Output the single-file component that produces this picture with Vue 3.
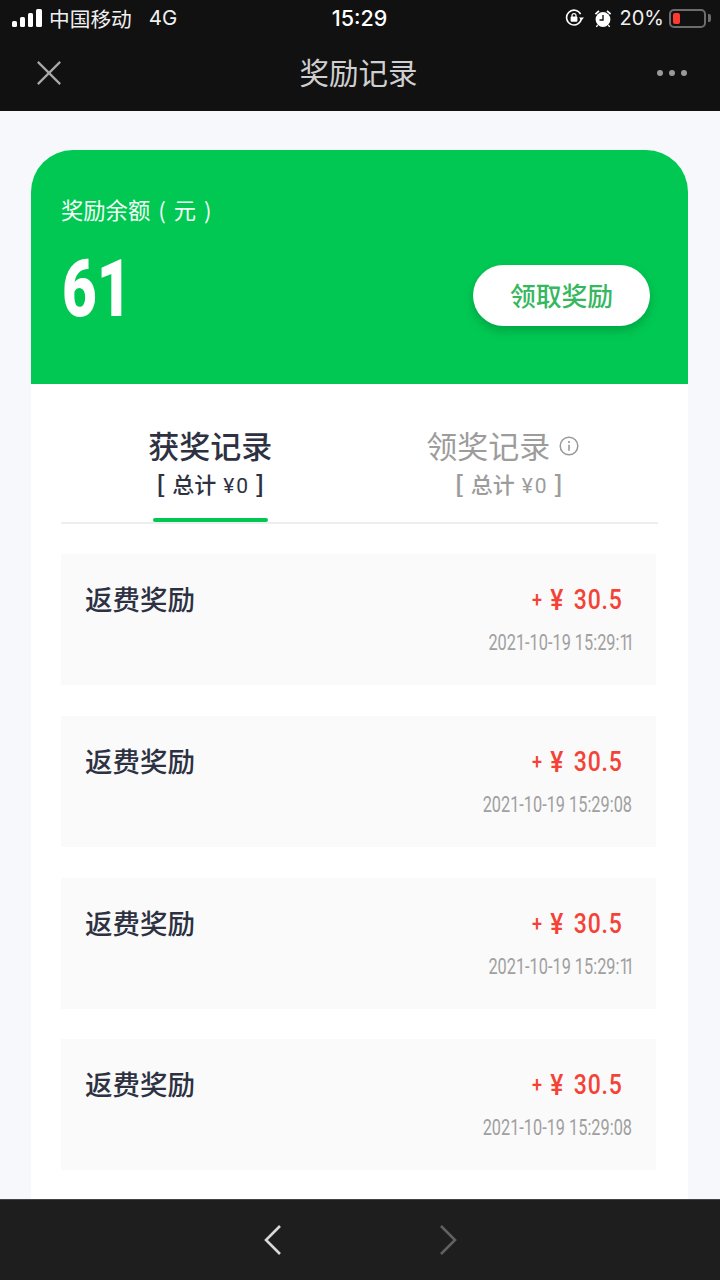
<script setup>
const records = [
  { stamp: '2021-10-19 15:29:', sec: '11', scale: 'narrow' },
  { stamp: '2021-10-19 15:29:', sec: '08', scale: '' },
  { stamp: '2021-10-19 15:29:', sec: '11', scale: 'narrow' },
  { stamp: '2021-10-19 15:29:', sec: '08', scale: '' },
]
</script>

<template>
  <div class="page">
    <header class="top">
      <div class="status">
        <div class="status-left">
          <span class="signal"><i class="b1"></i><i class="b2"></i><i class="b3"></i><i class="b4"></i></span>
          <span class="carrier">中国移动</span>
          <span class="net">4G</span>
        </div>
        <div class="clock">15:29</div>
        <div class="status-right">
          <svg class="lock" width="20" height="18" viewBox="0 0 20 18">
            <path d="M15.6 5.2A7.4 7.4 0 1 0 16.4 9" fill="none" stroke="#fff" stroke-width="1.6"/>
            <path d="M14 8.6h5l-2.5 3z" fill="#fff"/>
            <rect x="5.6" y="7.6" width="6.8" height="5.2" rx="1" fill="#fff"/>
            <path d="M7 8V6.6a2 2 0 0 1 4 0V8" fill="none" stroke="#fff" stroke-width="1.2"/>
          </svg>
          <svg class="alarm" width="18" height="19" viewBox="0 0 18 19">
            <circle cx="9" cy="10.5" r="7.4" fill="#fff"/>
            <path d="M9 6v5H5.5" fill="none" stroke="#111" stroke-width="1.4"/>
            <path d="M0.8 4.6 4.4 1.2 5.6 2.4 2 5.8zM17.2 4.6 13.6 1.2 12.4 2.4 16 5.8z" fill="#fff"/>
            <path d="M3.6 16 2.4 18M14.4 16l1.2 2" stroke="#fff" stroke-width="1.4"/>
          </svg>
          <span class="pct">20%</span>
          <span class="battery"><i class="level"></i></span>
          <span class="nub"></span>
        </div>
      </div>
      <div class="nav">
        <svg class="close" width="28" height="28" viewBox="0 0 28 28">
          <path d="M2 2 26 26M26 2 2 26" stroke="#a8a8a8" stroke-width="2.4" fill="none"/>
        </svg>
        <h1 class="title">奖励记录</h1>
        <div class="dots"><i></i><i></i><i></i></div>
      </div>
    </header>

    <main class="content">
      <section class="card">
        <div class="hero">
          <div class="hero-label">奖励余额 ( 元 )</div>
          <div class="hero-row">
            <div class="balance">61</div>
            <button class="claim">领取奖励</button>
          </div>
        </div>

        <div class="body">
          <div class="tabs">
            <div class="tab active">
              <div class="tab-title">获奖记录</div>
              <div class="tab-sub"><span class="bracket">[</span><span>总计</span><span class="tab-money">¥0</span><span class="bracket">]</span></div>
              <div class="tab-bar"></div>
            </div>
            <div class="tab muted">
              <div class="tab-title with-icon">
                领奖记录
                <svg class="info" width="20" height="20" viewBox="0 0 20 20">
                  <circle cx="10" cy="10" r="8.8" fill="none" stroke="#999" stroke-width="1.5"/>
                  <circle cx="10" cy="6" r="1.1" fill="#999"/>
                  <path d="M10 8.8v6" stroke="#999" stroke-width="1.6"/>
                </svg>
              </div>
              <div class="tab-sub"><span class="bracket">[</span><span>总计</span><span class="tab-money">¥0</span><span class="bracket">]</span></div>
            </div>
          </div>

          <ul class="list">
            <li v-for="(r, i) in records" :key="i" class="item">
              <div class="item-name">返费奖励</div>
              <div class="item-right">
                <div class="amount"><span class="plus">+</span><span class="yen">¥</span><span>30.5</span></div>
                <div class="time">{{ r.stamp }}<span :class="r.scale">{{ r.sec }}</span></div>
              </div>
            </li>
          </ul>
        </div>
      </section>
    </main>

    <footer class="bottom">
      <svg width="20" height="32" viewBox="0 0 20 32">
        <path d="M17 2 3 16l14 14" fill="none" stroke="#d8d8d8" stroke-width="2.6"/>
      </svg>
      <svg width="20" height="32" viewBox="0 0 20 32">
        <path d="M3 2l14 14L3 30" fill="none" stroke="#616161" stroke-width="2.6"/>
      </svg>
    </footer>
  </div>
</template>

<style>
html, body { margin: 0; padding: 0; background: #f6f8fb; }
</style>

<style scoped>
.page {
  width: 720px;
  height: 1280px;
  display: flex;
  flex-direction: column;
  overflow: hidden;
  background: #f6f8fb;
  font-family: "Noto Sans CJK SC", "Noto Sans", sans-serif;
}
.top { height: 111px; background: #111; flex: none; }
.status {
  height: 36px;
  display: grid;
  grid-template-columns: 1fr auto 1fr;
  align-items: center;
  color: #f0f0f0;
  padding: 0 9px 0 12px;
}
.status-left, .status-right { display: flex; align-items: center; }
.status-right { justify-content: flex-end; }
.signal { display: flex; align-items: flex-end; gap: 3px; height: 18px; }
.signal i { width: 5px; background: #fff; border-radius: 1.5px; display: block; }
.signal .b1 { height: 6px; }
.signal .b2 { height: 10px; }
.signal .b3 { height: 14px; }
.signal .b4 { height: 18px; width: 6px; }
.carrier { font-size: 20.7px; line-height: 24px; margin-left: 7px; }
.net { font-family: "Inter", sans-serif; font-size: 20.5px; line-height: 24px; margin-left: 17px; }
.clock { font-family: "Inter", sans-serif; font-size: 21.5px; font-weight: 500; line-height: 24px; color: #fff; margin-right: 4px; }
.lock { margin-right: 9px; }
.alarm { margin-right: 8px; }
.pct { font-family: "Inter", sans-serif; font-size: 20px; line-height: 24px; margin-right: 5px; }
.battery {
  box-sizing: border-box;
  width: 37px;
  height: 19px;
  border: 2px solid #6c6c6c;
  border-radius: 5px;
  padding: 2px;
  display: flex;
}
.level { width: 7px; background: #ff3b30; border-radius: 2px; display: block; }
.nub { width: 3px; height: 8px; background: #6c6c6c; border-radius: 0 2px 2px 0; margin-left: 2px; }

.nav {
  height: 75px;
  box-sizing: border-box;
  display: grid;
  grid-template-columns: 1fr auto 1fr;
  align-items: center;
  padding: 0 33px 1px 36px;
}
.close { width: 26px; height: 26px; }
.title { margin: 0 6px 5px 0; font-size: 29.5px; font-weight: 400; color: #cfcfcf; line-height: 40px; }
.dots { display: flex; justify-content: flex-end; gap: 6px; }
.dots i { width: 6px; height: 6px; border-radius: 50%; background: #9a9a9a; display: block; }

.content { flex: 1; min-height: 0; overflow: hidden; padding: 39px 32px 0 31px; }
.card { height: 100%; background: #fff; border-radius: 42px 42px 0 0; overflow: hidden; }
.hero { height: 234px; box-sizing: border-box; background: #00c853; padding: 42px 38px 0 30px; color: #fff; }
.hero-label { font-size: 22.3px; line-height: 34px; color: #f2fff6; word-spacing: 3px; }
.hero-row { display: flex; justify-content: space-between; align-items: center; margin-top: 17px; }
.balance {
  font-family: Roboto, sans-serif;
  font-size: 80px;
  font-weight: 900;
  line-height: 92px;
  margin-left: 1px;
  transform: scaleX(0.75);
  transform-origin: left center;
}
.claim {
  width: 177px;
  height: 61px;
  margin-top: 13px;
  border: 0;
  border-radius: 31px;
  padding: 0 0 2px;
  background: #fff;
  color: #36b760;
  font: inherit;
  font-size: 25.8px;
  font-weight: 500;
  box-shadow: 0 5px 10px rgba(0, 80, 30, 0.28);
}

.body { padding: 0 30px; }
.tabs { display: flex; height: 140px; border-bottom: 2px solid #eeeeee; width: 597px; box-sizing: border-box; }
.tab { flex: 1; display: flex; flex-direction: column; align-items: center; position: relative; padding-top: 41px; }
.tab-title { font-size: 31px; line-height: 40px; font-weight: 500; color: #2d3142; white-space: nowrap; }
.tab-sub {
  font-size: 22px;
  line-height: 32px;
  margin-top: 2px;
  font-weight: 500;
  color: #2d3142;
  display: flex;
  align-items: center;
  gap: 7px;
  white-space: nowrap;
}
.bracket { font-size: 24px; font-weight: 700; }
.tab-money { font-family: Roboto, sans-serif; font-size: 21px; line-height: 26px; letter-spacing: 2px; font-weight: 400; padding-top: 6px; margin-right: -2px; }
.tab-bar { position: absolute; left: 92px; bottom: 0; width: 115px; height: 4px; border-radius: 2px; background: #00c853; }
.muted .tab-title, .muted .tab-sub { color: #9c9c9c; }
.muted .tab-title { font-weight: 400; }
.with-icon { display: flex; align-items: center; gap: 9px; margin-left: -12px; }
.info { margin-top: 1px; }
.list { list-style: none; margin: 30px 0 0; padding: 0; width: 595px; display: flex; flex-direction: column; gap: 30.8px; }
.item {
  height: 131px;
  box-sizing: border-box;
  background: #fafafa;
  display: flex;
  justify-content: space-between;
  padding: 26px 24px 0 24px;
}
.item-name { font-size: 27.5px; line-height: 40px; font-weight: 500; color: #2d3142; margin-top: -2px; }
.item-right { display: flex; flex-direction: column; align-items: flex-end; }
.amount {
  font-family: Roboto, sans-serif;
  font-size: 28px;
  font-weight: 500;
  line-height: 40px;
  letter-spacing: 1px;
  color: #f44336;
  margin-right: 9px;
  display: flex;
  align-items: center;
  transform: scaleX(0.82);
  transform-origin: right center;
}
.plus { font-size: 22px; margin-right: 9px; }
.yen { font-size: 30px; margin-right: 12px; }
.time {
  font-family: Roboto, sans-serif;
  font-size: 22.5px;
  line-height: 28px;
  color: #a0a0a0;
  margin-top: 8px;
  white-space: nowrap;
  transform: scaleX(0.725);
  transform-origin: right center;
}
.narrow { letter-spacing: -5px; margin-right: 2px; }

.bottom {
  height: 81px;
  flex: none;
  box-sizing: border-box;
  background: #1e1e1e;
  border-top: 1px solid #444;
  display: flex;
  justify-content: center;
  align-items: center;
  gap: 155px;
}
</style>
